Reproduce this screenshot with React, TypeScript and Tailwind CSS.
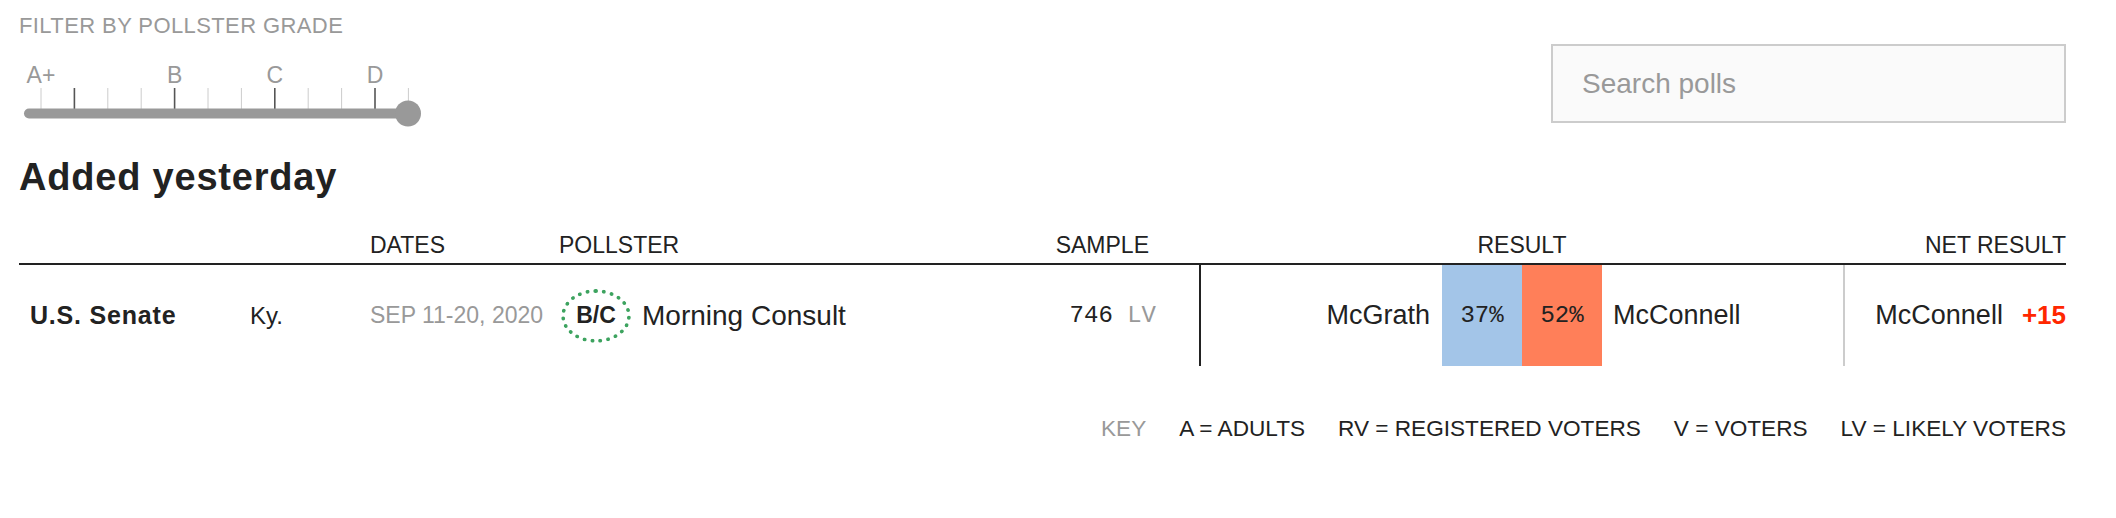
const ticks = Array.from({ length: 12 }, (_, i) => i);
const majorTicks = [1, 4, 7, 10];
const gradeLabels = [
  { label: "A+", tick: 0 },
  { label: "B", tick: 4 },
  { label: "C", tick: 7 },
  { label: "D", tick: 10 },
];
const tickX = (i: number) => 22 + 33.4 * i;

function GradeSlider() {
  return (
    <div className="relative w-[410px] h-[90px]">
      {gradeLabels.map((g) => (
        <span
          key={g.label}
          className="absolute top-[23px] -translate-x-1/2 text-[23px] leading-[28px] text-[#999]"
          style={{ left: tickX(g.tick) }}
        >
          {g.label}
        </span>
      ))}
      <svg width="410" height="90" className="block">
        {ticks.map((i) => (
          <line
            key={i}
            x1={tickX(i)}
            x2={tickX(i)}
            y1={50}
            y2={71}
            stroke={majorTicks.includes(i) ? "#555" : "#ccc"}
            strokeWidth={majorTicks.includes(i) ? 1.6 : 1}
          />
        ))}
        <rect x="5" y="70.5" width="384" height="10" rx="5" fill="#999" />
        <circle cx="389" cy="75.5" r="13" fill="#999" />
      </svg>
    </div>
  );
}

const cols = "grid grid-cols-[231px_120px_189px_441px_201px_642px_223px]";

export default function App() {
  return (
    <div className="w-[2116px] h-[518px] bg-white font-['Liberation_Sans',Arial,sans-serif] text-[#222] pl-[19px] pr-[50px] pt-[14px]">
      <div className="flex justify-between items-start">
        <div>
          <div className="text-[22px] leading-[24px] tracking-[0.4px] text-[#999]">FILTER BY POLLSTER GRADE</div>
          <GradeSlider />
        </div>
        <input
          placeholder="Search polls"
          className="mt-[30px] w-[515px] h-[79px] border-2 border-[#ccc] bg-[#fafafa] pl-[29px] text-[28px] text-[#222] placeholder:text-[#999] outline-none"
        />
      </div>

      <h2 className="mt-[27px] text-[38px] leading-[44px] font-bold tracking-[0.8px]">Added yesterday</h2>

      <div className={`${cols} mt-[33px] text-[23px] leading-[26px] pb-[5px] border-b-2 border-[#222]`}>
        <div />
        <div />
        <div>DATES</div>
        <div>POLLSTER</div>
        <div className="text-right pr-[52px]">SAMPLE</div>
        <div className="text-center">RESULT</div>
        <div className="text-right">NET RESULT</div>
      </div>

      <div className={`${cols} h-[101px]`}>
        <div className="flex items-center pl-[11px] text-[25px] font-bold tracking-[0.8px]">U.S. Senate</div>
        <div className="flex items-center text-[24px]">Ky.</div>
        <div className="flex items-center text-[23px] text-[#999]">SEP 11-20, 2020</div>
        <div className="flex items-center">
          <div className="ml-[2px] w-[70px] h-[54px] rounded-[50%] border-4 border-dotted border-[#3da35f] flex items-center justify-center text-[23px] font-bold">
            B/C
          </div>
          <span className="ml-[11px] text-[28px]">Morning Consult</span>
        </div>
        <div className="flex items-center justify-end pr-[43px] border-r-2 border-[#222] font-['Liberation_Mono',monospace] text-[24px]">
          746&nbsp;<span className="text-[#999]">LV</span>
        </div>
        <div className="grid grid-cols-[1fr_80px_80px_1fr] text-[27px]">
          <div className="flex items-center justify-end pr-[12px]">McGrath</div>
          <div className="flex items-center justify-center bg-[#a3c5e8] font-['Liberation_Mono',monospace] text-[24px]">37%</div>
          <div className="flex items-center justify-center bg-[#ff7f59] font-['Liberation_Mono',monospace] text-[24px]">52%</div>
          <div className="flex items-center pl-[11px]">McConnell</div>
        </div>
        <div className="flex items-center justify-end gap-[19px] border-l-2 border-[#ccc]">
          <span className="text-[27px]">McConnell</span>
          <span className="text-[26px] font-bold text-[#ff2700]">+15</span>
        </div>
      </div>

      <div className="mt-[50px] flex justify-end gap-[33px] text-[22.6px] leading-[26px]">
        <span className="text-[#999]">KEY</span>
        <span>A = ADULTS</span>
        <span>RV = REGISTERED VOTERS</span>
        <span>V = VOTERS</span>
        <span>LV = LIKELY VOTERS</span>
      </div>
    </div>
  );
}
